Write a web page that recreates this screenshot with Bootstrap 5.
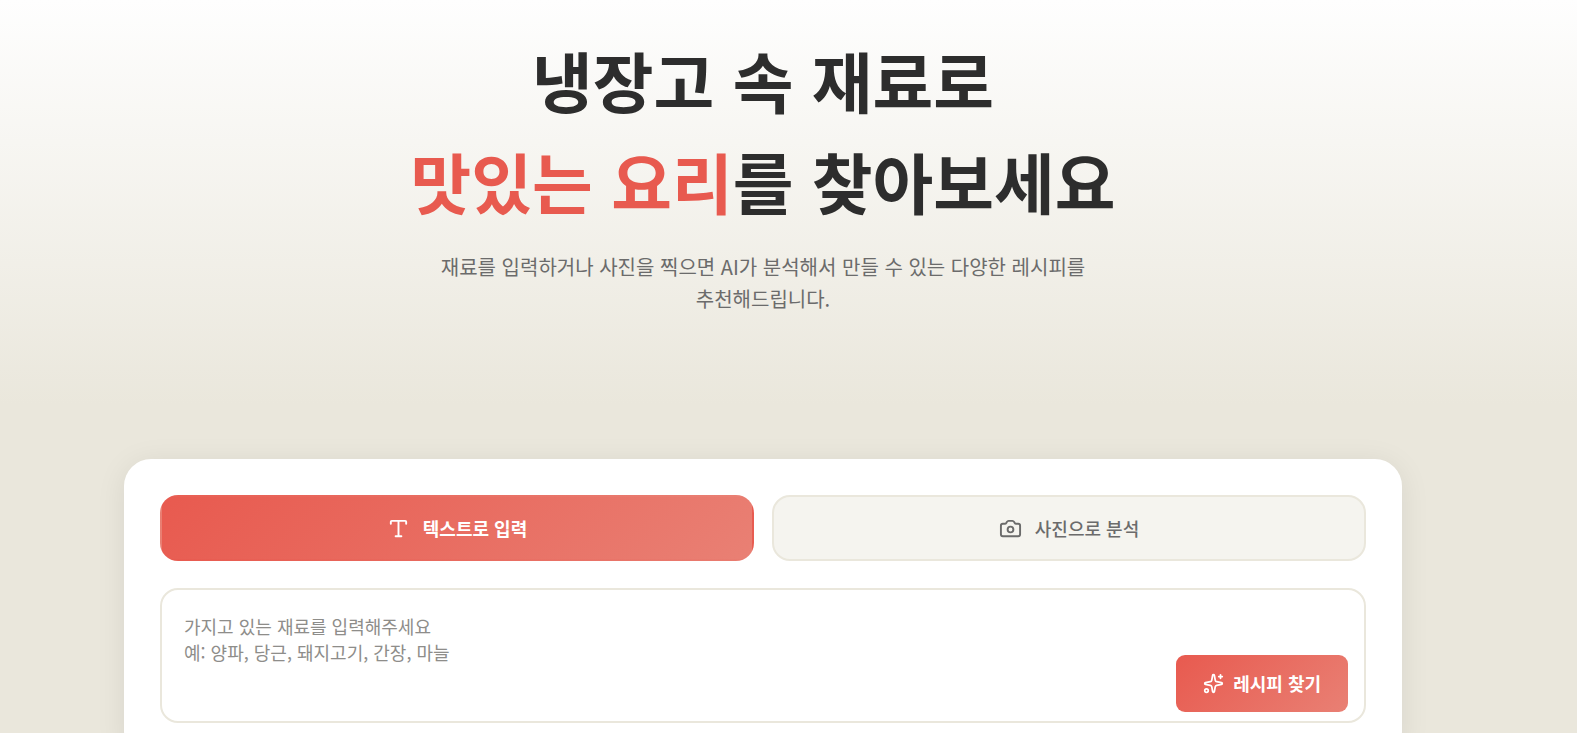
<!DOCTYPE html>
<html lang="ko">
<head>
<meta charset="utf-8">
<meta name="viewport" content="width=device-width, initial-scale=1">
<title>냉장고 속 재료로 맛있는 요리를 찾아보세요</title>
<link href="https://cdn.jsdelivr.net/npm/bootstrap@5.3.0/dist/css/bootstrap.min.css" rel="stylesheet">
<style>
  :root {
    --coral: #e85a4f;
    --coral-soft: #e98074;
    --sand: #eae7dc;
    --paper: #f5f4ef;
    --ink: #2d2d2d;
    --ink-soft: #6b6b6b;
  }
  body {
    background: var(--sand);
    color: var(--ink);
    font-family: "Noto Sans CJK KR", "Noto Sans", sans-serif;
    font-size: 18px;
    word-break: keep-all;
  }
  .hero { background: linear-gradient(180deg, #fefefe 0%, var(--sand) 100%); padding: 29px 0 90px; }
  .page-inner { padding-right: 51px; }
  .hero-title { margin-bottom: 20px; font-size: 66px; line-height: 101px; font-weight: 700; }
  .hero-title em { color: var(--coral); font-style: normal; }
  .hero-copy { max-width: 676px; font-size: 20px; line-height: 32px; color: var(--ink-soft); }
  .finder { max-width: 1350px; padding: 54px 36px; }
  .finder-card { border: 0; border-radius: 27px; padding: 36px; box-shadow: 0 4px 30px rgba(0, 0, 0, .08); }
  .mode-row { gap: 18px; margin-bottom: 27px; }
  .btn-mode {
    flex: 1 1 0;
    gap: 13px;
    height: 66px;
    border: 2px solid var(--sand);
    border-radius: 18px;
    background: var(--paper);
    color: var(--ink-soft);
    font-size: 18px;
    font-weight: 500;
  }
  .btn-mode.active, .btn-find { background-image: linear-gradient(135deg, var(--coral), var(--coral-soft)); color: #fff; }
  .btn-mode.active { border-color: transparent; font-weight: 700; }
  .ingredients {
    height: 135px;
    padding: 23px 22px;
    border: 2px solid var(--sand);
    border-radius: 18px;
    font-size: 18px;
    line-height: 26px;
    resize: none;
  }
  .ingredients::placeholder { color: #8e8d8a; }
  .btn-find {
    position: absolute;
    right: 18px;
    bottom: 11px;
    gap: 9px;
    height: 57px;
    padding: 0 27px;
    border: 0;
    border-radius: 9px;
    font-size: 18px;
    font-weight: 700;
  }
  .line-icon { width: 23px; height: 23px; flex: none; fill: none; stroke: currentColor; stroke-width: 2; stroke-linecap: round; stroke-linejoin: round; }
  .btn-find .line-icon { width: 21px; height: 21px; }
</style>
</head>
<body>
<header class="hero">
  <div class="page-inner text-center">
    <h1 class="hero-title">냉장고 속 재료로<br><em>맛있는 요리</em>를 찾아보세요</h1>
    <p class="hero-copy mx-auto mb-0">재료를 입력하거나 사진을 찍으면 AI가 분석해서 만들 수 있는 다양한 레시피를 추천해드립니다.</p>
  </div>
</header>
<main class="page-inner">
  <div class="finder mx-auto">
    <section class="card finder-card">
      <div class="d-flex mode-row">
        <button type="button" class="btn btn-mode active d-flex align-items-center justify-content-center">
          <svg class="line-icon" viewBox="0 0 24 24" aria-hidden="true"><path d="M12 4v16M4 7V5a1 1 0 0 1 1-1h14a1 1 0 0 1 1 1v2M9 20h6"/></svg>
          <span>텍스트로 입력</span>
        </button>
        <button type="button" class="btn btn-mode d-flex align-items-center justify-content-center">
          <svg class="line-icon" viewBox="0 0 24 24" aria-hidden="true"><path d="M13.997 4a2 2 0 0 1 1.76 1.05l.486.9A2 2 0 0 0 18.003 7H20a2 2 0 0 1 2 2v9a2 2 0 0 1-2 2H4a2 2 0 0 1-2-2V9a2 2 0 0 1 2-2h1.997a2 2 0 0 0 1.759-1.048l.489-.904A2 2 0 0 1 10.004 4z"/><circle cx="12" cy="13" r="3"/></svg>
          <span>사진으로 분석</span>
        </button>
      </div>
      <form class="position-relative">
        <textarea class="form-control ingredients" aria-label="재료" placeholder="가지고 있는 재료를 입력해주세요&#10;예: 양파, 당근, 돼지고기, 간장, 마늘"></textarea>
        <button type="button" class="btn btn-find d-flex align-items-center">
          <svg class="line-icon" viewBox="0 0 24 24" aria-hidden="true"><path d="M11.017 2.814a1 1 0 0 1 1.966 0l1.051 5.558a2 2 0 0 0 1.594 1.594l5.558 1.051a1 1 0 0 1 0 1.966l-5.558 1.051a2 2 0 0 0-1.594 1.594l-1.051 5.558a1 1 0 0 1-1.966 0l-1.051-5.558a2 2 0 0 0-1.594-1.594l-5.558-1.051a1 1 0 0 1 0-1.966l5.558-1.051a2 2 0 0 0 1.594-1.594zM20 2v4M22 4h-4"/><circle cx="4" cy="20" r="2"/></svg>
          <span>레시피 찾기</span>
        </button>
      </form>
    </section>
  </div>
</main>
<script src="https://cdn.jsdelivr.net/npm/bootstrap@5.3.0/dist/js/bootstrap.bundle.min.js"></script>
</body>
</html>
